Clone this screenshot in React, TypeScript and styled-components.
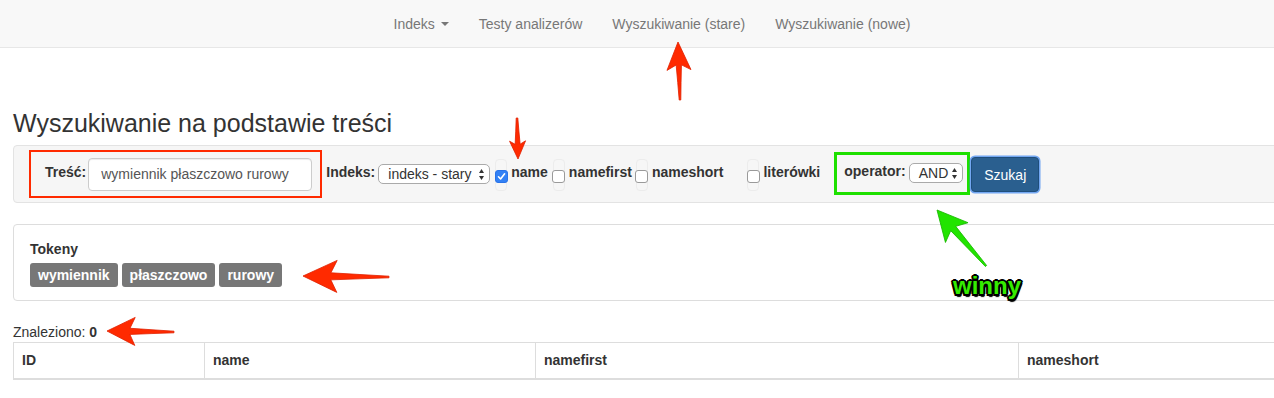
import { styled, createGlobalStyle } from 'styled-components';

const GlobalStyle = createGlobalStyle`
  html, body {
    margin: 0;
    padding: 0;
    background: #fff;
    overflow: hidden;
  }
  body {
    font-family: "Liberation Sans", Arial, Helvetica, sans-serif;
    font-size: 14px;
    line-height: 20px;
    color: #333;
  }
`;

const Page = styled.div`
  position: relative;
  width: 1304px;
  height: 398px;
`;

const Navbar = styled.nav`
  height: 47px;
  background: #f8f8f8;
  border-bottom: 1px solid #e7e7e7;
  display: flex;
  justify-content: center;
  align-items: center;
`;

const NavLink = styled.a`
  padding: 0 15px;
  color: #777;
  text-decoration: none;
  display: flex;
  align-items: center;
`;

const Caret = styled.span`
  display: inline-block;
  margin-left: 6px;
  border-top: 4px solid #777;
  border-left: 4px solid transparent;
  border-right: 4px solid transparent;
`;

const Main = styled.main`
  padding: 0 13px;
`;

const Title = styled.h3`
  margin: 62px 0 8px;
  font-size: 25px;
  line-height: 27px;
  font-weight: 400;
  color: #333;
`;

const Well = styled.form`
  height: 58px;
  box-sizing: border-box;
  background: #f6f6f6;
  border: 1px solid #e3e3e3;
  border-radius: 4px;
  padding-left: 15px;
  display: flex;
  align-items: center;
`;

const Marked = styled.div<{ $color: string; $width: number }>`
  display: flex;
  align-items: center;
  box-sizing: border-box;
  border: ${(p) => p.$width}px solid ${(p) => p.$color};
`;

const TreschBox = styled(Marked)`
  height: 48px;
  padding: 0 8px 0 14px;
`;

const OperatorBox = styled(Marked)`
  height: 43px;
  width: 136px;
  margin-left: 14px;
  padding: 0 4px 0 7px;
  margin-top: -2px;
`;

const Label = styled.label<{ $gap?: number }>`
  font-weight: 700;
  margin-bottom: 4px;
  margin-left: ${(p) => p.$gap ?? 0}px;
  white-space: nowrap;
`;

const TextInput = styled.input`
  width: 224px;
  height: 33px;
  box-sizing: border-box;
  margin-left: 2px;
  padding: 6px 12px;
  border: 1px solid #ccc;
  border-radius: 4px;
  font-family: inherit;
  font-size: 14px;
  color: #555;
  background: #fff;
  box-shadow: inset 0 1px 1px rgba(0, 0, 0, 0.075);
`;

const SelectBox = styled.div<{ $width: number }>`
  width: ${(p) => p.$width}px;
  height: 20px;
  box-sizing: border-box;
  margin-left: 3px;
  border: 1px solid #aaa;
  border-radius: 5px;
  background: #fff;
  display: flex;
  align-items: center;
  justify-content: space-between;
  padding: 0 5px 0 9px;
  font-size: 14px;
  color: #333;
`;

const CheckCell = styled.span<{ $gap: number }>`
  width: 12px;
  height: 32px;
  box-sizing: border-box;
  margin-left: ${(p) => p.$gap}px;
  margin-top: 2px;
  border: 1px solid #ececec;
  border-radius: 4px;
  display: flex;
  align-items: center;
  justify-content: center;
`;

const Check = styled.span<{ $on?: boolean }>`
  flex: none;
  width: 13px;
  height: 13px;
  margin-top: 3px;
  box-sizing: border-box;
  border-radius: 3px;
  border: 1px solid ${(p) => (p.$on ? '#2a73e8' : '#9a9a9a')};
  background: ${(p) => (p.$on ? '#3381f5' : '#fff')};
  display: flex;
  align-items: center;
  justify-content: center;
`;

const SubmitButton = styled.button`
  margin-left: 1px;
  margin-top: 1px;
  height: 35px;
  padding: 0 12px;
  font-family: inherit;
  font-size: 14px;
  color: #fff;
  background: #2a5f8f;
  border: 1px solid #1f4e7c;
  border-radius: 4px;
  box-shadow: 0 0 0 1.5px rgba(70, 140, 240, 0.75);
`;

const Panel = styled.section`
  margin-top: 21px;
  border: 1px solid #ddd;
  border-radius: 4px;
  padding: 14px 16px 13px;
`;

const PanelTitle = styled.div`
  font-weight: 700;
`;

const Tokens = styled.div`
  display: flex;
  gap: 4px;
  margin-top: 4px;
`;

const Token = styled.span`
  background: #777;
  color: #fff;
  font-weight: 700;
  line-height: 24px;
  padding: 0 8px;
  border-radius: 3px;
`;

const Found = styled.div`
  margin-top: 21px;
`;

const Table = styled.table`
  width: 100%;
  table-layout: fixed;
  border-collapse: collapse;
`;

const Th = styled.th`
  text-align: left;
  padding: 8px;
  line-height: 19px;
  border: 1px solid #ddd;
  border-bottom: 2px solid #ddd;
  border-right: none;
  font-weight: 700;
`;

const Overlay = styled.svg`
  position: absolute;
  left: 0;
  top: 0;
  pointer-events: none;
`;

const Blame = styled.div`
  position: absolute;
  left: 953px;
  top: 274px;
  font-size: 24px;
  line-height: 24px;
  font-weight: 700;
  color: #35ec00;
  text-shadow: -1.5px -1.5px 0 #000, 1.5px -1.5px 0 #000, -1.5px 1.5px 0 #000,
    1.5px 1.5px 0 #000, 0 2px 0 #000, 0 -2px 0 #000, 2px 0 0 #000, -2px 0 0 #000,
    1px 2.5px 1px #000;
`;

function Arrows() {
  return (
    <svg width="5" height="11" viewBox="0 0 5 11">
      <path d="M2.5 0 L5 4 L0 4 Z M2.5 11 L5 7 L0 7 Z" fill="#333" />
    </svg>
  );
}

function Tick() {
  return (
    <svg width="9" height="9" viewBox="0 0 9 9">
      <path d="M1.5 4.8 L3.6 7 L7.6 1.8" fill="none" stroke="#fff" strokeWidth="1.6" strokeLinecap="round" strokeLinejoin="round" />
    </svg>
  );
}

type ArrowProps = {
  from: [number, number];
  to: [number, number];
  head: number;
  half: number;
  color: string;
  edge: string;
};

// skitch-like arrow, tip at `to`
function Arrow({ from, to, head, half, color, edge }: ArrowProps) {
  const dx = to[0] - from[0];
  const dy = to[1] - from[1];
  const len = Math.hypot(dx, dy);
  const angle = (Math.atan2(dy, dx) * 180) / Math.PI;
  const neck = head * 0.82;
  const t1 = Math.max(2.5, half * 0.22);
  const d = `M0 0 L${-head} ${-half} L${-neck} ${-t1} Q${-(len + neck) / 2} ${-t1 * 0.6} ${-len} -0.8 L${-len} 0.8 Q${-(len + neck) / 2} ${t1 * 0.6} ${-neck} ${t1} L${-head} ${half} Z`;
  return (
    <path
      d={d}
      transform={`translate(${to[0]} ${to[1]}) rotate(${angle})`}
      fill={color}
      stroke={edge}
      strokeWidth="0.8"
      strokeLinejoin="round"
    />
  );
}

const red = '#ff2a00';
const redEdge = '#e02000';
const green = '#22e400';
const greenEdge = '#18b800';

export default function App() {
  return (
    <Page>
      <GlobalStyle />
      <Navbar>
        <NavLink>
          Indeks <Caret />
        </NavLink>
        <NavLink>Testy analizerów</NavLink>
        <NavLink>Wyszukiwanie (stare)</NavLink>
        <NavLink>Wyszukiwanie (nowe)</NavLink>
      </Navbar>

      <Main>
        <Title>Wyszukiwanie na podstawie treści</Title>

        <Well>
          <TreschBox $color="#ff2a00" $width={2}>
            <Label>Treść:</Label>
            <TextInput defaultValue="wymiennik płaszczowo rurowy" />
          </TreschBox>
          <Label $gap={4}>Indeks:</Label>
          <SelectBox $width={112}>
            <span>indeks - stary</span>
            <Arrows />
          </SelectBox>
          <CheckCell $gap={5}>
            <Check $on>
              <Tick />
            </Check>
          </CheckCell>
          <Label $gap={4}>name</Label>
          <CheckCell $gap={5}>
            <Check />
          </CheckCell>
          <Label $gap={4}>namefirst</Label>
          <CheckCell $gap={4}>
            <Check />
          </CheckCell>
          <Label $gap={4}>nameshort</Label>
          <CheckCell $gap={24}>
            <Check />
          </CheckCell>
          <Label $gap={4}>literówki</Label>
          <OperatorBox $color="#1ee000" $width={3}>
            <Label>operator:</Label>
            <SelectBox $width={54}>
              <span>AND</span>
              <Arrows />
            </SelectBox>
          </OperatorBox>
          <SubmitButton type="button">Szukaj</SubmitButton>
        </Well>

        <Panel>
          <PanelTitle>Tokeny</PanelTitle>
          <Tokens>
            <Token>wymiennik</Token>
            <Token>płaszczowo</Token>
            <Token>rurowy</Token>
          </Tokens>
        </Panel>

        <Found>
          Znaleziono: <b>0</b>
        </Found>
        <Table>
          <colgroup>
            <col style={{ width: 191 }} />
            <col style={{ width: 331 }} />
            <col style={{ width: 483 }} />
            <col />
          </colgroup>
          <thead>
            <tr>
              <Th>ID</Th>
              <Th>name</Th>
              <Th>namefirst</Th>
              <Th>nameshort</Th>
            </tr>
          </thead>
        </Table>
      </Main>

      <Overlay width="1304" height="398">
        <Arrow from={[680, 100]} to={[678, 42]} head={28} half={12} color={red} edge={redEdge} />
        <Arrow from={[517, 118]} to={[518, 159]} head={18} half={8} color={red} edge={redEdge} />
        <Arrow from={[389, 277]} to={[303, 276]} head={34} half={16} color={red} edge={redEdge} />
        <Arrow from={[174, 332]} to={[107, 331]} head={28} half={14} color={red} edge={redEdge} />
        <Arrow from={[986, 266]} to={[937, 210]} head={30} half={15} color={green} edge={greenEdge} />
      </Overlay>
      <Blame>winny</Blame>
    </Page>
  );
}
